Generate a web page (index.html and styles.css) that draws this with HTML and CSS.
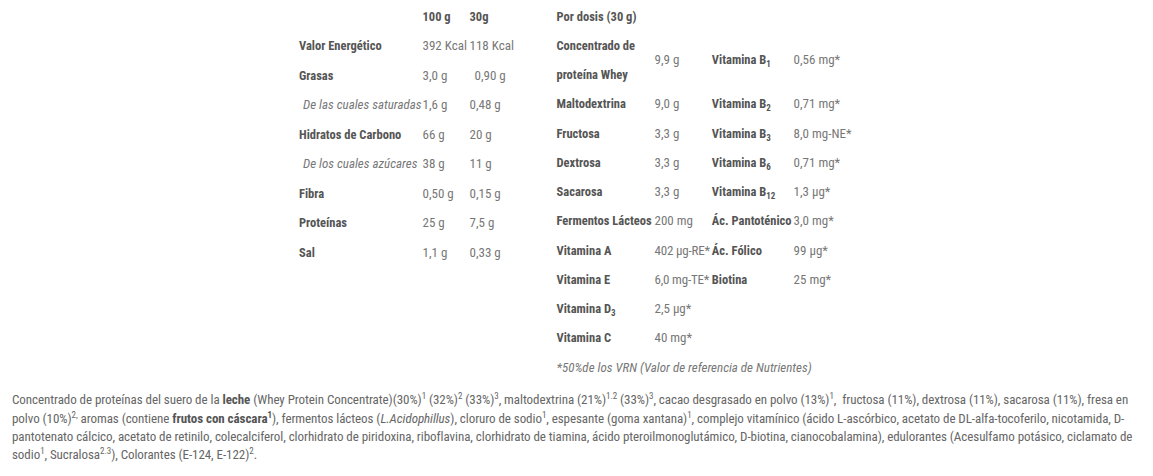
FILE: index.html
```html
<!DOCTYPE html>
<html lang="es">
<head>
<meta charset="utf-8">
<link rel="stylesheet" href="styles.css">
</head>
<body>
<div class="tables">
  <table class="nt nt-left">
    <tr class="head"><td></td><td class="b">100 g</td><td class="b">30g</td></tr>
    <tr><td class="lbl">Valor Energético</td><td>392 Kcal</td><td>118 Kcal</td></tr>
    <tr><td class="lbl">Grasas</td><td>3,0 g</td><td class="shift">0,90 g</td></tr>
    <tr><td class="sub">De las cuales saturadas</td><td>1,6 g</td><td>0,48 g</td></tr>
    <tr><td class="lbl">Hidratos de Carbono</td><td>66 g</td><td>20 g</td></tr>
    <tr><td class="sub">De los cuales azúcares</td><td>38 g</td><td>11 g</td></tr>
    <tr><td class="lbl">Fibra</td><td>0,50 g</td><td>0,15 g</td></tr>
    <tr><td class="lbl">Proteínas</td><td>25 g</td><td>7,5 g</td></tr>
    <tr><td class="lbl">Sal</td><td>1,1 g</td><td>0,33 g</td></tr>
  </table>
  <table class="nt nt-right">
    <tr class="head"><td class="b" colspan="4">Por dosis (30 g)</td></tr>
    <tr><td class="lbl">Concentrado de<br>proteína Whey</td><td>9,9 g</td><td class="lbl">Vitamina B<sub>1</sub></td><td>0,56 mg*</td></tr>
    <tr><td class="lbl">Maltodextrina</td><td>9,0 g</td><td class="lbl">Vitamina B<sub>2</sub></td><td>0,71 mg*</td></tr>
    <tr><td class="lbl">Fructosa</td><td>3,3 g</td><td class="lbl">Vitamina B<sub>3</sub></td><td>8,0 mg-NE*</td></tr>
    <tr><td class="lbl">Dextrosa</td><td>3,3 g</td><td class="lbl">Vitamina B<sub>6</sub></td><td>0,71 mg*</td></tr>
    <tr><td class="lbl">Sacarosa</td><td>3,3 g</td><td class="lbl">Vitamina B<sub>12</sub></td><td>1,3 µg*</td></tr>
    <tr><td class="lbl">Fermentos Lácteos</td><td>200 mg</td><td class="lbl">Ác. Pantoténico</td><td>3,0 mg*</td></tr>
    <tr><td class="lbl">Vitamina A</td><td class="tight">402 µg-RE*</td><td class="lbl">Ác. Fólico</td><td>99 µg*</td></tr>
    <tr><td class="lbl">Vitamina E</td><td class="tight">6,0 mg-TE*</td><td class="lbl">Biotina</td><td>25 mg*</td></tr>
    <tr><td class="lbl">Vitamina D<sub>3</sub></td><td>2,5 µg*</td><td></td><td></td></tr>
    <tr><td class="lbl">Vitamina C</td><td>40 mg*</td><td></td><td></td></tr>
    <tr><td class="note" colspan="4">*50%de los VRN (Valor de referencia de Nutrientes)</td></tr>
  </table>
</div>
<p class="ingredients">Concentrado de proteínas del suero de la <b>leche</b> (Whey Protein Concentrate)(30%)<sup>1</sup> (32%)<sup>2</sup> (33%)<sup>3</sup>, maltodextrina (21%)<sup>1.2</sup> (33%)<sup>3</sup>, cacao desgrasado en polvo (13%)<sup>1</sup>,&nbsp; fructosa (11%), dextrosa (11%), sacarosa (11%), fresa en polvo (10%)<sup>2,</sup> aromas (contiene <b>frutos con cáscara<sup>1</sup></b>), fermentos lácteos (<i>L.Acidophillus</i>), cloruro de sodio<sup>1</sup>, espesante (goma xantana)<sup>1</sup>, complejo vitamínico (ácido L-ascórbico, acetato de DL-alfa-tocoferilo, nicotamida, D-pantotenato cálcico, acetato de retinilo, colecalciferol, clorhidrato de piridoxina, riboflavina, clorhidrato de tiamina, ácido pteroilmonoglutámico, D-biotina, cianocobalamina), edulorantes (Acesulfamo potásico, ciclamato de sodio<sup>1</sup>, Sucralosa<sup>2.3</sup>), Colorantes (E-124, E-122)<sup>2</sup>.</p>
</body>
</html>
```
FILE: styles.css
```css
html, body {
  margin: 0;
  padding: 0;
  background: #fff;
}
body {
  font-family: "Roboto Condensed", Roboto, sans-serif;
  font-size: 13px;
  color: #777;
}
.tables {
  display: flex;
  align-items: flex-start;
  gap: 35px;
  padding: 1.5px 0 0 298px;
}
.nt {
  border-collapse: collapse;
}
.nt td {
  padding: 0 1px;
  line-height: 29.25px;
  vertical-align: middle;
  white-space: nowrap;
  font-size: 13px;
}
.nt-left td {
  line-height: 29.5px;
}
.nt .b, .nt .lbl {
  font-weight: 700;
  font-size: 12.5px;
  color: #555;
}
.nt .sub {
  font-style: italic;
  padding: 0 0 0 5px;
}
.nt-left td:nth-child(1) { width: 100px; }
.nt-left td:nth-child(2) { width: 45px; }
.nt-left td:nth-child(3) { width: 45px; }
.nt-left .shift { padding-left: 6px; }
.nt-right td:nth-child(1) { width: 96px; }
.nt-right td:nth-child(2) { width: 52px; }
.nt-right td:nth-child(3) { width: 78px; }
.nt-right .tight { letter-spacing: -0.2px; }
.nt-right .note {
  font-style: italic;
  color: #777;
}
.nt sub {
  font-size: 9px;
  vertical-align: -3px;
  line-height: 0;
}
.ingredients {
  margin: 9.5px 0 0;
  padding: 0 11px 0 12px;
  font-size: 13px;
  line-height: 18.4px;
  letter-spacing: -0.06px;
  color: #666;
}
.ingredients b {
  font-weight: 700;
  color: #555;
}
.ingredients sup {
  font-size: 9px;
  line-height: 0;
  vertical-align: 5px;
}
```
